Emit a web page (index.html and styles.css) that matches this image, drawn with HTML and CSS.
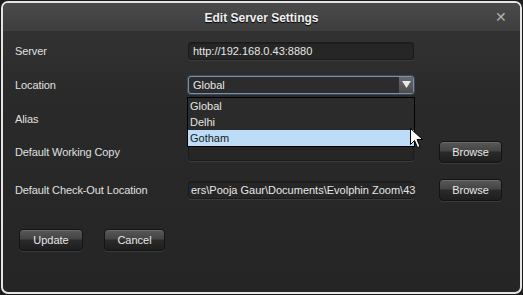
FILE: index.html
```html
<!DOCTYPE html>
<html lang="en">
<head>
  <meta charset="UTF-8">
  <title>Edit Server Settings</title>
  <link rel="stylesheet" href="styles.css">
</head>
<body>

  <div class="dialog">
    <div class="title-bar">
      <span class="title">Edit Server Settings</span>
      <span class="close">&#x2715;</span>
    </div>

    <div class="fields">
      <label>Server</label>
      <div class="field"><span>http://192.168.0.43:8880</span></div>
      <div></div>

      <label>Location</label>
      <div class="field select">
        <span>Global</span>
        <span class="arrow"><svg width="9" height="7" viewBox="0 0 9 7"><path d="M0 0h9L4.5 7z" fill="#e8e8e8"/></svg></span>
        <!-- lista aperta -->
        <ul class="options">
          <li>Global</li>
          <li>Delhi</li>
          <li class="hover">Gotham</li>
        </ul>
      </div>
      <div></div>

      <label>Alias</label>
      <div class="field"></div>
      <div></div>

      <label>Default Working Copy</label>
      <div class="field"></div>
      <button class="btn">Browse</button>

      <label>Default Check-Out Location</label>
      <div class="field path"><span>ers\Pooja Gaur\Documents\Evolphin Zoom\43</span></div>
      <button class="btn">Browse</button>
    </div>

    <div class="actions">
      <button class="btn">Update</button>
      <button class="btn">Cancel</button>
    </div>

    <svg class="cursor" width="13" height="21" viewBox="0 0 13 21">
      <path d="M0.5 0.5v16l4-4 3 7 2.5-1-3-7h5.5z" fill="#fff" stroke="#000" stroke-width="1"/>
    </svg>
  </div>

</body>
</html>
```

FILE: styles.css
```css
* { box-sizing: border-box; }
html { background: #1c1c1c; }
body {
  margin: 0; width: 523px; height: 295px; overflow: hidden;
  font-family: "Liberation Sans", Arial, sans-serif; font-size: 11px; color: #e2e2e2;
}
.dialog {
  position: relative;
  margin: 1px; width: 521px; height: 293px;
  border: 2px solid #e4e4e4; border-radius: 7px;
  background: linear-gradient(#363636, #2a2a2a 90px, #252525);
  overflow: hidden;
}
.title-bar {
  height: 28px;
  display: flex; align-items: center; justify-content: center;
  background: linear-gradient(#4a4a4a, #3e3e3e);
  position: relative;
}
.title {
  font-weight: bold; font-size: 12px; color: #f2f2f2;
  text-shadow: 0 1px 1px #000;
  margin-top: 1px;
}
.close {
  position: absolute; right: 13px; top: 6px;
  color: #b0b0b0; font-size: 14px;
}
.fields {
  display: grid;
  grid-template-columns: 148px 226px 63px;
  grid-template-rows: 33px 35px 33px 34px 42px;
  column-gap: 25px;
  align-items: center;
  padding: 3px 0 0 12px;
}
label { font-size: 11px; color: #e0e0e0; letter-spacing: -0.1px; }
.field {
  position: relative;
  height: 18px;
  display: flex; align-items: center;
  padding: 0 4px;
  background: #262626;
  border: 1px solid #1b1b1b;
  border-radius: 3px;
  box-shadow: 0 1px 0 #3c3c3c, inset 0 1px 1px #1e1e1e;
  color: #e6e6e6; white-space: nowrap;
}
.select {
  border-color: #7890a8;
  box-shadow: 0 0 0 1px #3a4a5a;
  background: #2c2c2c;
  padding-right: 0;
}
.select span:first-child { flex: 1; }
.arrow {
  width: 14px; height: 16px;
  display: flex; align-items: center; justify-content: center;
  background: linear-gradient(#6a6a6a, #4c4c4c);
  border-radius: 0 2px 2px 0;
}
.path { padding: 0 2px; }
.options {
  position: absolute; top: 20px; left: -2px; width: 228px;
  margin: 0; padding: 0; list-style: none;
  background: #2b2b2b; border: 1px solid #000;
  z-index: 2;
}
.options li { height: 16px; line-height: 16px; padding-left: 2px; color: #e4e4e4; }
.options li.hover { background: #bcdcf8; color: #1a1a1a; }
.btn {
  height: 22px; width: 63px;
  font-family: inherit; font-size: 11px; color: #e8e8e8;
  border: 1px solid #141414; border-radius: 4px;
  background: linear-gradient(#585858, #444 45%, #2a2a2a 50%, #1e1e1e);
  box-shadow: inset 0 1px 0 #6a6a6a, 0 1px 0 #3a3a3a;
  padding: 0;
}
.actions {
  display: flex; gap: 21px;
  padding: 18px 0 0 16px;
}
.actions .btn:first-child { width: 64px; }
.actions .btn:last-child { width: 61px; }
.cursor { position: absolute; left: 407px; top: 125px; z-index: 3; }
```
